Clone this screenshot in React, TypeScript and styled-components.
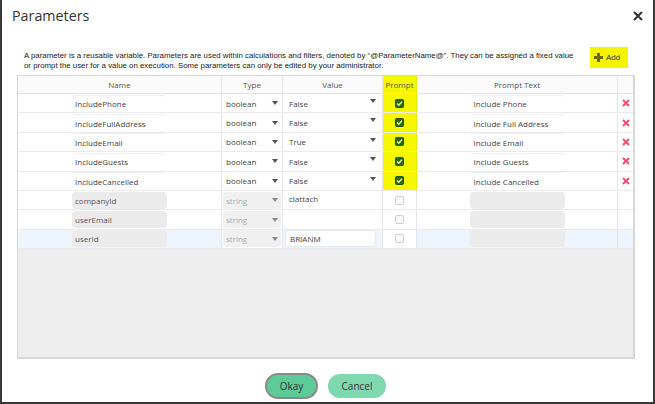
import React from 'react';
import styled, { createGlobalStyle } from 'styled-components';

const Global = createGlobalStyle`
  html, body { margin: 0; padding: 0; background: #fff; }
  body { font-family: "Open Sans", "Liberation Sans", sans-serif; }
  * { box-sizing: border-box; }
`;

const Dialog = styled.div`
  width: 655px;
  height: 404px;
  background: #fff;
  border-left: 2px solid #3a3a3a;
  border-right: 2px solid #3a3a3a;
  border-bottom: 2px solid #3a3a3a;
  display: flex;
  flex-direction: column;
`;

const TitleBar = styled.div`
  height: 30px;
  display: flex;
  align-items: center;
  justify-content: space-between;
  padding: 0 10px 0 10px;
`;

const Title = styled.div`
  font-family: "Open Sans", sans-serif;
  font-size: 14.3px;
  color: #333;
`;

const CloseButton = styled.div`
  width: 10px;
  height: 10px;
  display: flex;
  margin-top: 1px;
`;

const Intro = styled.div`
  margin-top: 17px;
  height: 21px;
  display: flex;
  justify-content: space-between;
  align-items: flex-start;
  padding: 0 25px 0 22px;
`;

const IntroText = styled.div`
  margin-top: 4px;
  font-family: "Liberation Sans", Arial, sans-serif;
  font-size: 7.85px;
  line-height: 10px;
  color: #222;
  white-space: nowrap;
`;

const AddButton = styled.div`
  width: 38px;
  height: 21px;
  background: #f4f400;
  display: flex;
  align-items: center;
  gap: 3px;
  padding-left: 4px;
  font-family: "Liberation Sans", Arial, sans-serif;
  font-size: 8px;
  color: #333;
`;

const TableBox = styled.div`
  margin: 7px 0 0 15px;
  width: 618px;
  height: 284px;
  flex-shrink: 0;
  border: 1px solid #d8d8d8;
  border-right-width: 2px;
  border-bottom-width: 2px;
  background: #eeeeee;
  display: flex;
  flex-direction: column;
`;

const columns = '204px 61px 100px 34px 201px 15px';

const HeaderRow = styled.div`
  display: grid;
  grid-template-columns: ${columns};
  height: 18px;
  background: #fafafa;
  border-bottom: 1px solid #e4e4e4;
`;

const Row = styled.div<{ $selected?: boolean }>`
  display: grid;
  grid-template-columns: ${columns};
  height: 19.4px;
  background: ${(p) => (p.$selected ? '#edf4fc' : '#fff')};
  border-bottom: 1px solid #ebebeb;
`;

const Cell = styled.div<{ $highlight?: boolean; $white?: boolean; $align?: string; $last?: boolean }>`
  display: flex;
  align-items: center;
  justify-content: ${(p) => p.$align || 'flex-start'};
  border-right: ${(p) => (p.$last ? 'none' : p.$highlight ? '1px solid #e8e800' : '1px solid #e6e6e6')};
  background: ${(p) => (p.$highlight ? '#f7f700' : p.$white ? '#fff' : 'transparent')};
  font-size: 8px;
  color: #444;
  position: relative;
  min-width: 0;
`;

const HeaderCell = styled(Cell)`
  justify-content: center;
  color: #555;
  font-size: 8px;
`;

const NameBox = styled.div<{ $locked?: boolean }>`
  width: 95px;
  height: 17px;
  border-radius: 4px;
  padding-left: 3px;
  display: flex;
  align-items: center;
  background: ${(p) => (p.$locked ? '#ebebeb' : '#fff')};
  border-top: ${(p) => (p.$locked ? 'none' : '1px solid #f0f0f0')};
  color: ${(p) => (p.$locked ? '#555' : '#444')};
  font-size: 8px;
`;

const TypeBox = styled.div<{ $locked?: boolean }>`
  flex: 1;
  height: 17px;
  margin: 0 1px;
  border-radius: 4px;
  display: flex;
  align-items: center;
  justify-content: space-between;
  padding: 0 3px 0 3px;
  background: ${(p) => (p.$locked ? '#f0f0f0' : 'transparent')};
  color: ${(p) => (p.$locked ? '#aaa' : '#444')};
`;

const ValueCell = styled(Cell)`
  padding: 0 6px;
  justify-content: space-between;
`;

const ValueText = styled.span<{ $raised?: boolean }>`
  margin-top: ${(p) => (p.$raised ? '-3px' : '0')};
`;

const ValueInput = styled.div`
  width: 98px;
  height: 17px;
  margin-left: -4px;
  padding-left: 4px;
  display: flex;
  align-items: center;
  background: #fff;
  border: 1px solid #e2eaf3;
  border-radius: 3px;
  color: #444;
`;

const ArrowWrap = styled.span<{ $top?: boolean }>`
  display: flex;
  align-self: ${(p) => (p.$top ? 'flex-start' : 'center')};
  margin-top: ${(p) => (p.$top ? '5px' : '0')};
`;

const PromptBox = styled(NameBox)`
  padding-left: 4px;
`;

const Body = styled.div`
  flex: 1;
`;

const Footer = styled.div`
  margin-top: 14px;
  display: flex;
  justify-content: center;
  align-items: center;
  gap: 10px;
  padding-right: 4px;
`;

const Button = styled.div<{ $primary?: boolean }>`
  height: ${(p) => (p.$primary ? '26px' : '24px')};
  width: ${(p) => (p.$primary ? '53px' : '58px')};
  border-radius: 13px;
  display: flex;
  align-items: center;
  justify-content: center;
  background: ${(p) => (p.$primary ? '#5dcb98' : '#80d8b0')};
  border: ${(p) => (p.$primary ? '2px solid #8a8a8a' : 'none')};
  font-family: "Open Sans", sans-serif;
  font-size: 10px;
  color: #333;
`;

const Arrow = ({ color = '#555' }: { color?: string }) => (
  <svg width="6" height="4" viewBox="0 0 6 4">
    <polygon points="0,0 6,0 3,4" fill={color} />
  </svg>
);

const CheckBox = ({ checked }: { checked: boolean }) =>
  checked ? (
    <svg width="9" height="9" viewBox="0 0 9 9">
      <rect x="0.5" y="0.5" width="8" height="8" rx="1" fill="#2b6a10" stroke="#1f5208" />
      <path d="M2 4.6 L3.8 6.3 L7 2.8" fill="none" stroke="#e6f5a0" strokeWidth="1.4" />
    </svg>
  ) : (
    <svg width="9" height="9" viewBox="0 0 9 9">
      <rect x="0.5" y="0.5" width="8" height="8" rx="1.5" fill="#f9f9f9" stroke="#d0d0d0" />
    </svg>
  );

const DeleteX = () => (
  <svg width="8" height="8" viewBox="0 0 8 8">
    <path d="M1 1 L7 7 M7 1 L1 7" stroke="#ef4a6e" strokeWidth="1.8" />
  </svg>
);

type Param = {
  name: string;
  type: string;
  value: string;
  prompt: boolean;
  text?: string;
  input?: boolean;
  selected?: boolean;
};

const params: Param[] = [
  { name: 'IncludePhone', type: 'boolean', value: 'False', prompt: true, text: 'Include Phone' },
  { name: 'IncludeFullAddress', type: 'boolean', value: 'False', prompt: true, text: 'Include Full Address' },
  { name: 'IncludeEmail', type: 'boolean', value: 'True', prompt: true, text: 'Include Email' },
  { name: 'IncludeGuests', type: 'boolean', value: 'False', prompt: true, text: 'Include Guests' },
  { name: 'IncludeCancelled', type: 'boolean', value: 'False', prompt: true, text: 'Include Cancelled' },
  { name: 'companyId', type: 'string', value: 'clattach', prompt: false },
  { name: 'userEmail', type: 'string', value: '', prompt: false },
  { name: 'userId', type: 'string', value: 'BRIANM', prompt: false, input: true, selected: true },
];

export default function App() {
  return (
    <>
      <Global />
      <Dialog>
        <TitleBar>
          <Title>Parameters</Title>
          <CloseButton>
            <svg width="10" height="10" viewBox="0 0 10 10">
              <path d="M1 1 L9 9 M9 1 L1 9" stroke="#333" strokeWidth="2" />
            </svg>
          </CloseButton>
        </TitleBar>
        <Intro>
          <IntroText>
            A parameter is a reusable variable. Parameters are used within calculations and filters, denoted by “@ParameterName@”. They can be assigned a fixed value
            <br />
            or prompt the user for a value on execution. Some parameters can only be edited by your administrator.
          </IntroText>
          <AddButton>
            <svg width="9" height="9" viewBox="0 0 9 9">
              <rect x="3" y="0" width="3" height="9" fill="#6a6a08" />
              <rect x="0" y="3" width="9" height="3" fill="#6a6a08" />
            </svg>
            Add
          </AddButton>
        </Intro>
        <TableBox>
          <HeaderRow>
            <HeaderCell>Name</HeaderCell>
            <HeaderCell>Type</HeaderCell>
            <HeaderCell>Value</HeaderCell>
            <HeaderCell $highlight>Prompt</HeaderCell>
            <HeaderCell>Prompt Text</HeaderCell>
            <HeaderCell $last />
          </HeaderRow>
          {params.map((p) => {
            const locked = p.type === 'string';
            return (
              <Row key={p.name} $selected={p.selected}>
                <Cell $align="center">
                  <NameBox $locked={locked}>{p.name}</NameBox>
                </Cell>
                <Cell $white={p.selected}>
                  <TypeBox $locked={locked}>
                    {p.type}
                    <Arrow color={locked ? '#888' : '#555'} />
                  </TypeBox>
                </Cell>
                <ValueCell>
                  {p.input ? (
                    <ValueInput>{p.value}</ValueInput>
                  ) : (
                    <ValueText $raised={locked}>{p.value}</ValueText>
                  )}
                  {!locked && (
                    <ArrowWrap $top>
                      <Arrow />
                    </ArrowWrap>
                  )}
                </ValueCell>
                <Cell $align="center" $highlight={p.prompt} $white={p.selected}>
                  <CheckBox checked={p.prompt} />
                </Cell>
                <Cell $align="center">
                  <PromptBox $locked={locked}>{p.text || ''}</PromptBox>
                </Cell>
                <Cell $align="center" $last>
                  {!locked && <DeleteX />}
                </Cell>
              </Row>
            );
          })}
          <Body />
        </TableBox>
        <Footer>
          <Button $primary>Okay</Button>
          <Button>Cancel</Button>
        </Footer>
      </Dialog>
    </>
  );
}
